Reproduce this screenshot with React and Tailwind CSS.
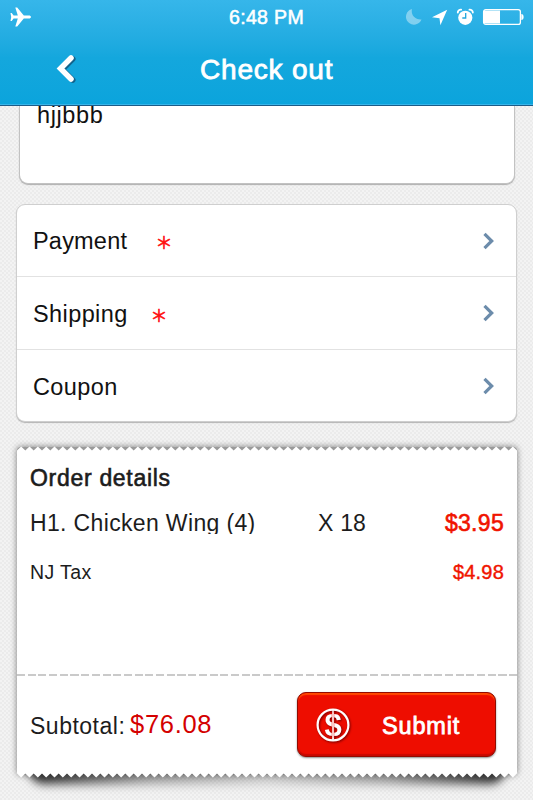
import React from 'react';

const options = [
    { label: 'Payment', required: true, labelClass: 'w-[119px] tracking-[0.2px] pt-px' },
    { label: 'Shipping', required: true, labelClass: 'w-[114px] tracking-[0.4px] pt-[2px]' },
    { label: 'Coupon', required: false, labelClass: 'w-[119px] tracking-[0.4px] pt-[3px]' },
];

const TEETH = 60;

// One row of paper teeth, point "up" or "down"
const zigzag = (up) => {
    const step = 500 / TEETH;
    let d = up ? 'M0 5' : 'M0 0';
    for (let i = 0; i < TEETH; i++) {
        const x = i * step;
        d += up
            ? ` L${x} 4.5 L${x + step / 2} 0.5 L${x + step} 4.5`
            : ` L${x} 0.5 L${x + step / 2} 4.5 L${x + step} 0.5`;
    }
    return d + (up ? ' V5 Z' : ' V0 Z');
};

const StatusBar = () => (
    <div className="flex h-[34px] items-center">
        <div className="w-[200px] pl-[10px]">
            <svg width="22" height="20" viewBox="0 0 22 20" fill="#fff">
                <path d="M21 10c0-.9-.9-1.500-2.200-1.500h-5L7.200 .6H5.300l2.500 7.900H3.600L1.700 6.100H.5L1.200 10l-.7 3.900h1.200l1.900-2.400h4.200l-2.500 7.900h1.900l6.600-7.900h5c1.300 0 2.200-.6 2.200-1.500z" />
            </svg>
        </div>
        <div className="w-[133px] text-center text-[19.500px] leading-[22px] tracking-[0.35px] [-webkit-text-stroke:0.55px_#fff]">6:48 PM</div>
        <div className="flex flex-1 items-center pl-[72px]">
            <svg width="18" height="18" viewBox="0 0 18 18" fill="#fff" opacity="0.4">
                <path d="M7 1A8 8 0 1 0 16.500 11.500A8.500 8.500 0 0 1 7 1z" />
            </svg>
            <svg className="ml-[8px]" width="17" height="17" viewBox="0 0 17 17" fill="#fff">
                <path d="M16.200 .8L9.400 16.200L8.500 9.300L1 8.200z" />
            </svg>
            <svg className="ml-[8px]" width="19" height="18" viewBox="0 0 19 18">
                <circle cx="9.300" cy="9.800" r="7.100" fill="#fff" />
                <path d="M1.800 4.600a3 3 0 0 1 3.300-3M16.800 4.600a3 3 0 0 0-3.300-3" fill="none" stroke="#fff" strokeWidth="1.900" strokeLinecap="round" />
                <path d="M9.700 5v5H6.300" fill="none" stroke="#22a7dc" strokeWidth="1.300" />
            </svg>
            <svg className="ml-[7px]" width="43" height="18" viewBox="0 0 43 18">
                <rect x="1.600" y="1.600" width="36.800" height="14.800" rx="2.200" fill="none" stroke="#fff" strokeWidth="1.300" />
                <path d="M39.300 6c1.500 0 2.300 1 2.300 3s-.8 3-2.300 3z" fill="#fff" />
                <rect x="2" y="2.500" width="16" height="13" fill="#fff" />
            </svg>
        </div>
    </div>
);

const Header = () => (
    <header className="relative z-10 h-[106px] border-b border-[#1b5c88] bg-linear-to-b from-[#36b6ea] via-[#14a7dd] via-55% to-[#0ba4dc] text-white">
        <StatusBar />
        <div className="flex h-[71px] items-center border-b border-[#37b5ea]">
            <div className="w-[200px] pl-[54px]">
                <svg width="26" height="32" viewBox="0 0 26 32" fill="none" strokeWidth="5.500" strokeLinecap="round" strokeLinejoin="miter">
                    <path d="M18.800 6L8.300 16.500l10.500 10.500" stroke="#12638c" />
                    <path d="M17 5L6.500 15.500L17 26" stroke="#fff" />
                </svg>
            </div>
            <h1 className="w-[134px] whitespace-nowrap pt-[2px] text-[28px] leading-[32px] tracking-[0.8px] [-webkit-text-stroke:0.8px_#fff]">Check out</h1>
        </div>
    </header>
);

const OptionRow = ({ label, required, labelClass }) => (
    <div className="flex h-[73px] items-center border-b border-[#e2e2e2] pl-[16px] pr-[20px] first:h-[72px] last:h-[71px] last:border-b-0">
        <span className={`text-[23.500px] leading-[28px] text-[#111] ${labelClass}`}>{label}</span>
        {required && (
            <span className="w-[24px] pt-[3px] text-center font-['Noto_Sans_CJK_JP',sans-serif] text-[17px] leading-[28px] text-[#ff1010] [-webkit-text-stroke:0.6px_#ff1010]">＊</span>
        )}
        <svg className="ml-auto" width="14" height="20" viewBox="0 0 14 20" fill="none" stroke="#6c8cab" strokeWidth="3.200">
            <path d="M2.500 2.800L9.700 10L2.500 17.200" />
        </svg>
    </div>
);

const SubmitButton = () => (
    <button className="flex h-[65px] w-[199px] items-center rounded-[9px] border border-[#930a00] bg-[#ee0d00] pl-[18px] text-white shadow-[0_1px_2px_rgba(0,0,0,0.45),inset_0_2px_1px_#ff4800,inset_0_-2px_1px_#c80800]">
        <svg className="shrink-0 overflow-visible" width="34" height="34" viewBox="0 0 34 34" style={{ filter: 'drop-shadow(1px 1px 1px #700)' }}>
            <circle cx="17" cy="17" r="15.400" fill="none" stroke="#fff" strokeWidth="2.200" />
            <text x="17" y="27.500" textAnchor="middle" fill="#fff" fontSize="31" fontWeight="bold">$</text>
            <path d="M17 4v26" stroke="#ee0d00" strokeWidth="2.600" opacity="0.75" />
            <path d="M17 2v30" stroke="#fff" strokeWidth="1.400" />
        </svg>
        <span className="ml-[32px] pt-[2px] text-[23.500px] leading-[28px] tracking-[0.85px] [-webkit-text-stroke:0.8px_#fff]">Submit</span>
    </button>
);

const Receipt = () => (
    <section className="relative ml-[17px] mt-[24px] h-[332px] w-[500px]">
        {/* shadow of the paper, heavier where the lower corners lift */}
        <div className="absolute inset-x-0 top-px bottom-[3px] rounded-[4px] bg-[#9a9a9a] shadow-[0_0_6px_rgba(0,0,0,0.5)]" />
        <div className="absolute bottom-[-6px] left-[12px] right-[12px] h-[15px] rounded-b-[40px] bg-[linear-gradient(90deg,rgba(0,0,0,0.85),rgba(0,0,0,0.35)_25%,rgba(0,0,0,0.15)_50%,rgba(0,0,0,0.35)_75%,rgba(0,0,0,0.85))] blur-[5px]" />

        <div className="relative flex h-full flex-col">
            <svg className="block shrink-0" width="500" height="5" viewBox="0 0 500 5" fill="#fff">
                <path d={zigzag(true)} />
            </svg>
            <div className="flex h-[322px] flex-col bg-white text-[#1c1c1c]">
                <div className="h-[223px] pl-[13px] pr-[13px] pt-[12px]">
                    <h2 className="text-[23px] leading-[30px] tracking-[0.7px] [-webkit-text-stroke:0.6px_#1c1c1c]">Order details</h2>
                    <div className="mt-[18px] flex h-[22px] items-start text-[23px] leading-[24px]">
                        <span className="h-[23px] w-[288px] overflow-hidden whitespace-nowrap tracking-[0.35px]">H1. Chicken Wing (4)</span>
                        <span className="tracking-[0.2px]">X 18</span>
                        <span className="ml-auto text-[23px] tracking-[0.3px] text-[#f01400] [-webkit-text-stroke:0.6px_#f01400]">$3.95</span>
                    </div>
                    <div className="mt-[26px] flex justify-between text-[19.500px] leading-[26px]">
                        <span className="tracking-[0.4px]">NJ Tax</span>
                        <span className="text-[20px] tracking-[0.2px] text-[#f01400] [-webkit-text-stroke:0.4px_#f01400]">$4.98</span>
                    </div>
                </div>
                <div className="h-[2px] bg-[repeating-linear-gradient(90deg,#cacaca_0_8px,#fff_8px_10.700px)]" />
                <div className="flex flex-1 items-start pl-[13px] pt-[16px]">
                    <div className="flex w-[267px] items-start pt-[17px]">
                        <span className="w-[100px] pt-px text-[23px] leading-[32px] tracking-[0.5px]">Subtotal:</span>
                        <span className="text-[25.500px] leading-[30px] tracking-[0.7px] text-[#d40000]">$76.08</span>
                    </div>
                    <SubmitButton />
                </div>
            </div>
            <svg className="block shrink-0" width="500" height="5" viewBox="0 0 500 5" fill="#fff">
                <path d={zigzag(false)} />
            </svg>
        </div>
    </section>
);

const App = () => {
    return (
        <div className="h-[800px] w-[533px] overflow-hidden bg-[repeating-conic-gradient(#ebebeb_0_25%,#f3f3f3_0_50%)] bg-[length:4px_4px] font-['Liberation_Sans',Arial,sans-serif]">
            <Header />
            <div className="ml-[19px] h-[78px] w-[496px] rounded-b-[9px] border-x border-b border-[#c2c2c2] bg-white pl-[17px] shadow-[0_1px_1px_#b0b0b0]">
                <p className="pt-px text-[23.500px] leading-[16px] tracking-[0.6px] text-[#111]">hjjbbb</p>
            </div>
            <div className="ml-[16px] mt-[20px] h-[218px] w-[501px] rounded-[9px] border border-[#cfcfcf] bg-white shadow-[0_1px_1px_#b4b4b4]">
                {options.map((option) => (
                    <OptionRow key={option.label} {...option} />
                ))}
            </div>
            <Receipt />
        </div>
    );
};

export default App;
